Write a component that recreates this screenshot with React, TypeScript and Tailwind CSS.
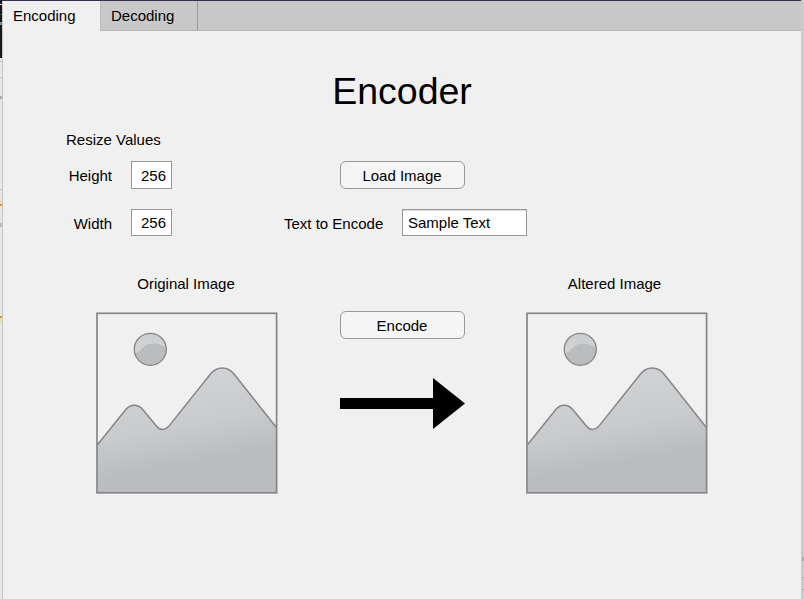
import React from "react";

function Placeholder({ id }: { id: string }) {
  const hills =
    "M1.3 133 L30 97.300 C34.500 91.800 42 91.800 46.500 97.300 L60.800 114.600 C64 118.500 69.200 118.500 72.500 114.600 L114.500 62 C121 54 131.500 54 138 62 L180.600 115.700";
  return (
    <svg width="182" height="182" viewBox="0 0 182 182" className="block">
      <defs>
        <linearGradient id={id} gradientUnits="userSpaceOnUse" x1="82" y1="76" x2="96" y2="152">
          <stop offset="0" stopColor="#d0d1d3" />
          <stop offset="0.5" stopColor="#c9cacc" />
          <stop offset="0.95" stopColor="#bcbdbf" />
          <stop offset="1" stopColor="#bbbcbe" />
        </linearGradient>
        <linearGradient id={id + "-sun"} x1="0" y1="0" x2="0" y2="1">
          <stop offset="0" stopColor="#cbccce" />
          <stop offset="0.5" stopColor="#d3d4d6" />
        </linearGradient>
        <clipPath id={id + "-clip"}>
          <circle cx="54.300" cy="37.300" r="16" />
        </clipPath>
      </defs>
      <path d={hills + " V181 H1.500 Z"} fill={`url(#${id})`} />
      <path d={hills} fill="none" stroke="#85868a" strokeWidth="1.500" />
      <rect x="1" y="1.300" width="179.600" height="179.500" fill="none" stroke="#85868a" strokeWidth="1.700" />
      <circle cx="54.300" cy="37.300" r="16" fill={`url(#${id}-sun)`} />
      <path d="M36 43 C45 41 46 31.500 57.500 31.500 Q65 31.500 72 37 V56 H36 Z" fill="#bbbcbe" clipPath={`url(#${id}-clip)`} />
      <circle cx="54.300" cy="37.300" r="16" fill="none" stroke="#85868a" strokeWidth="1.300" />
    </svg>
  );
}

function NumberField({ label, className }: { label: string; className: string }) {
  return (
    <label className="flex w-[169px] items-center">
      <span className="mt-0.5 w-[109px] text-right">{label}</span>
      <input
        defaultValue="256"
        className={"ml-[19px] w-[41px] border border-[#969696] bg-white pr-[5px] text-right outline-none " + className}
      />
    </label>
  );
}

function Button({ children }: { children: React.ReactNode }) {
  return (
    <button className="flex h-7 w-[125px] items-center justify-center rounded-[6px] border border-[#999] bg-[#f5f5f5] pt-0.5 pr-px">
      {children}
    </button>
  );
}

export default function App() {
  return (
    <div className="flex h-[599px] w-[804px] overflow-hidden bg-[#f0f0f0] font-['Liberation_Sans',Arial,sans-serif] text-[15px] leading-[18px] text-black">
      <div className="flex w-[2px] shrink-0 flex-col bg-[#e7e7e7]">
        <div className="h-[4px] bg-[#15191d]" />
        <div className="h-px bg-[#dedede]" />
        <div className="h-[9px] bg-[#15191d]" />
        <div className="h-px bg-[#24483c]" />
        <div className="h-[7px] bg-[#15191d]" />
        <div className="h-[3px] bg-[#85888c]" />
        <div className="h-[33px] bg-[#15191d]" />
        <div className="mt-[3px] h-px bg-[#bcbcbc]" />
        <div className="mt-[15px] h-px bg-[#c8c8c8]" />
        <div className="mt-[18px] h-[3px] bg-[#acacac]" />
        <div className="mt-[90px] h-px bg-[#c5c5c5]" />
        <div className="mt-[9px] h-[5px] bg-[#f0dfb2]" />
        <div className="h-[2px] bg-[#dc9713]" />
        <div className="mt-[17px] h-[4px] bg-[#bababa]" />
        <div className="mt-[89px] h-[2px] bg-[#dc9713]" />
        <div className="h-[5px] bg-[#f0dfb2]" />
      </div>
      <div className="w-px shrink-0 border-t border-[#303348] bg-[#c6c6c6]" />

      <main className="flex w-[798px] shrink-0 flex-col">
        <div className="h-px bg-[#303348]" />
        <nav className="flex h-[30px] bg-[#c8c8c8]">
          <div className="w-[97px] bg-[#f0f0f0] pt-[6px] pl-[10px]">Encoding</div>
          <div className="w-[98px] border-r border-b border-l border-r-[#999] border-b-[#b9b9b9] border-l-[#bdbdbd] pt-[6px] pl-[10px]">
            Decoding
          </div>
          <div className="flex-1 border-b border-[#b9b9b9]" />
        </nav>

        <h1 className="mt-[37px] h-[46px] text-center text-[37.5px] leading-[46px]">Encoder</h1>

        <div className="mt-[17px] h-[18px] pl-[63px]">Resize Values</div>

        <div className="mt-[12px] flex h-7">
          <NumberField label="Height" className="h-7" />
          <div className="ml-[168px]">
            <Button>Load Image</Button>
          </div>
        </div>

        <div className="mt-5 flex h-[27px]">
          <NumberField label="Width" className="h-[27px]" />
          <label className="ml-[112px] flex items-center">
            <span className="mt-[3px] w-[99px] whitespace-nowrap">Text to Encode</span>
            <input
              defaultValue="Sample Text"
              className="ml-[19px] h-[27px] w-[125px] border border-[#969696] bg-white pl-[5px] shadow-[inset_0_1px_0_#dedede] outline-none"
            />
          </label>
        </div>

        <div className="mt-[39px] flex">
          <figure className="ml-[93px] w-[182px]">
            <figcaption className="mb-[19px] h-[18px] pr-[2px] text-center">Original Image</figcaption>
            <Placeholder id="original" />
          </figure>
          <div className="ml-[62px] flex w-[125px] flex-col pt-9">
            <Button>Encode</Button>
            <svg width="125" height="51" viewBox="0 0 125 51" className="mt-[39px] block">
              <path d="M0 20H93V0L125 25.500L93 51V31H0Z" />
            </svg>
          </div>
          <figure className="ml-[61px] w-[182px]">
            <figcaption className="mb-[19px] h-[18px] pr-[5px] text-center">Altered Image</figcaption>
            <Placeholder id="altered" />
          </figure>
        </div>
      </main>

      <div className="flex w-[3px] shrink-0 flex-col bg-[#cbcbcb]">
        <div className="ml-px mt-[557px] h-[4px] bg-[#aaa]" />
        <div className="ml-px mt-[16px] h-px bg-[#aaa]" />
        <div className="ml-px mt-[11px] h-px bg-[#aaa]" />
      </div>
    </div>
  );
}
